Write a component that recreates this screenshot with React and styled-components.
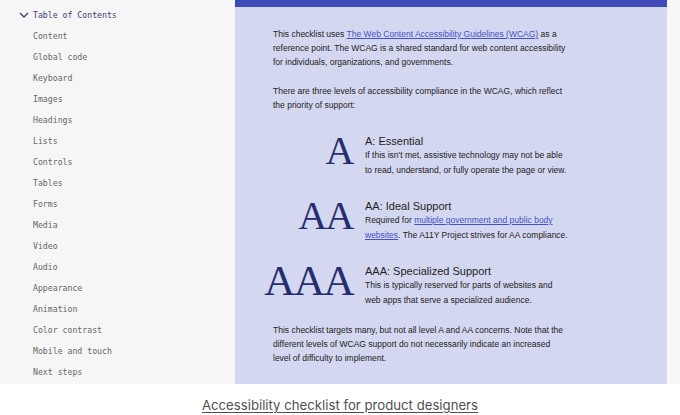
import styled, { createGlobalStyle } from "styled-components";

const GlobalStyle = createGlobalStyle`
  body {
    margin: 0;
    background: #ffffff;
  }
`;

const tocItems = [
  "Content",
  "Global code",
  "Keyboard",
  "Images",
  "Headings",
  "Lists",
  "Controls",
  "Tables",
  "Forms",
  "Media",
  "Video",
  "Audio",
  "Appearance",
  "Animation",
  "Color contrast",
  "Mobile and touch",
  "Next steps",
];

function getLevels() {
  return [
    {
      mark: "A",
      size: 40,
      title: "A: Essential",
      body: (
        <>
          If this isn't met, assistive technology may not be able
          <br />
          to read, understand, or fully operate the page or view.
        </>
      ),
    },
    {
      mark: "AA",
      size: 40,
      title: "AA: Ideal Support",
      body: (
        <>
          Required for <Link>multiple government and public body</Link>
          <br />
          <Link>websites</Link>. The A11Y Project strives for AA compliance.
        </>
      ),
    },
    {
      mark: "AAA",
      size: 43,
      title: "AAA: Specialized Support",
      body: (
        <>
          This is typically reserved for parts of websites and
          <br />
          web apps that serve a specialized audience.
        </>
      ),
    },
  ];
}

export default function App() {
  const levels = getLevels();
  return (
    <>
      <GlobalStyle />
      <Frame>
        <Sidebar>
          <TocTitle>
            <Chevron viewBox="0 0 10 6">
              <path d="M1 1l4 4 4-4" />
            </Chevron>
            Table of Contents
          </TocTitle>
          {tocItems.map((t) => (
            <TocItem key={t}>{t}</TocItem>
          ))}
        </Sidebar>
        <Main>
          <TopBar />
          <Content>
            <Para>
              This checklist uses{" "}
              <Link>The Web Content Accessibility Guidelines (WCAG)</Link> as a
              <br />
              reference point. The WCAG is a shared standard for web content
              accessibility
              <br />
              for individuals, organizations, and governments.
            </Para>
            <Para>
              There are three levels of accessibility compliance in the WCAG,
              which reflect
              <br />
              the priority of support:
            </Para>
            <Levels>
              {levels.map((l) => (
                <Level key={l.mark}>
                  <Mark $size={l.size}>
                    <span>{l.mark}</span>
                  </Mark>
                  <LevelText>
                    <LevelTitle>{l.title}</LevelTitle>
                    <LevelBody>{l.body}</LevelBody>
                  </LevelText>
                </Level>
              ))}
            </Levels>
            <Para>
              This checklist targets many, but not all level A and AA concerns.
              Note that the
              <br />
              different levels of WCAG support do not necessarily indicate an
              increased
              <br />
              level of difficulty to implement.
            </Para>
          </Content>
        </Main>
        <Strip />
      </Frame>
      <Caption>
        <CaptionLink>Accessibility checklist for product designers</CaptionLink>
      </Caption>
    </>
  );
}

const Frame = styled.div`
  display: flex;
  width: 680px;
  height: 384px;
  overflow: hidden;
`;

const Sidebar = styled.nav`
  width: 235px;
  flex-shrink: 0;
  background: #f6f6f6;
  padding: 9px 0 0 33px;
  box-sizing: border-box;
  font-family: "DejaVu Sans Mono", "Liberation Mono", monospace;
  font-size: 8.2px;
`;

const TocTitle = styled.div`
  position: relative;
  height: 21px;
  line-height: 12px;
  color: #3d4275;
`;

const Chevron = styled.svg`
  position: absolute;
  left: -14px;
  top: 3px;
  width: 10px;
  height: 6px;
  fill: none;
  stroke: #3d4275;
  stroke-width: 1.4;
`;

const TocItem = styled.div`
  height: 21px;
  line-height: 12px;
  color: #666666;
`;

const Main = styled.main`
  width: 432px;
  flex-shrink: 0;
  background: #d4d7f0;
  display: flex;
  flex-direction: column;
`;

const TopBar = styled.div`
  height: 7px;
  background: #3f4ab8;
`;

const Content = styled.div`
  padding: 20px 0 0 38px;
  font-family: "Liberation Sans", Arial, sans-serif;
  font-size: 8.5px;
  line-height: 14px;
  color: #222222;
`;

const Para = styled.p`
  margin: 0 0 15px;
`;

const Link = styled.span`
  color: #4551c6;
  text-decoration: underline;
`;

const Levels = styled.div`
  display: flex;
  flex-direction: column;
  gap: 21px;
  margin: 22px 0 15px;
`;

const Level = styled.div`
  display: grid;
  grid-template-columns: 80px auto;
  column-gap: 12px;
  align-items: start;
`;

const Mark = styled.div`
  display: flex;
  justify-content: flex-end;
  margin-top: -3px;
  font-family: "Liberation Serif", "Times New Roman", serif;
  font-size: ${(p) => p.$size}px;
  line-height: 40px;
  color: #262d6e;
  letter-spacing: -1.5px;
  white-space: nowrap;
`;

const LevelText = styled.div`
  display: flex;
  flex-direction: column;
`;

const LevelTitle = styled.div`
  font-size: 11px;
  line-height: 14px;
  color: #1e1e1e;
`;

const LevelBody = styled.div`
  line-height: 15px;
`;

const Strip = styled.div`
  flex: 1;
  background: #f7f7f7;
`;

const Caption = styled.div`
  display: flex;
  justify-content: center;
  padding-top: 13px;
`;

const CaptionLink = styled.span`
  font-family: Inter, "Liberation Sans", sans-serif;
  font-size: 13.2px;
  color: #505050;
  text-decoration: underline;
  text-underline-offset: 2px;
`;
